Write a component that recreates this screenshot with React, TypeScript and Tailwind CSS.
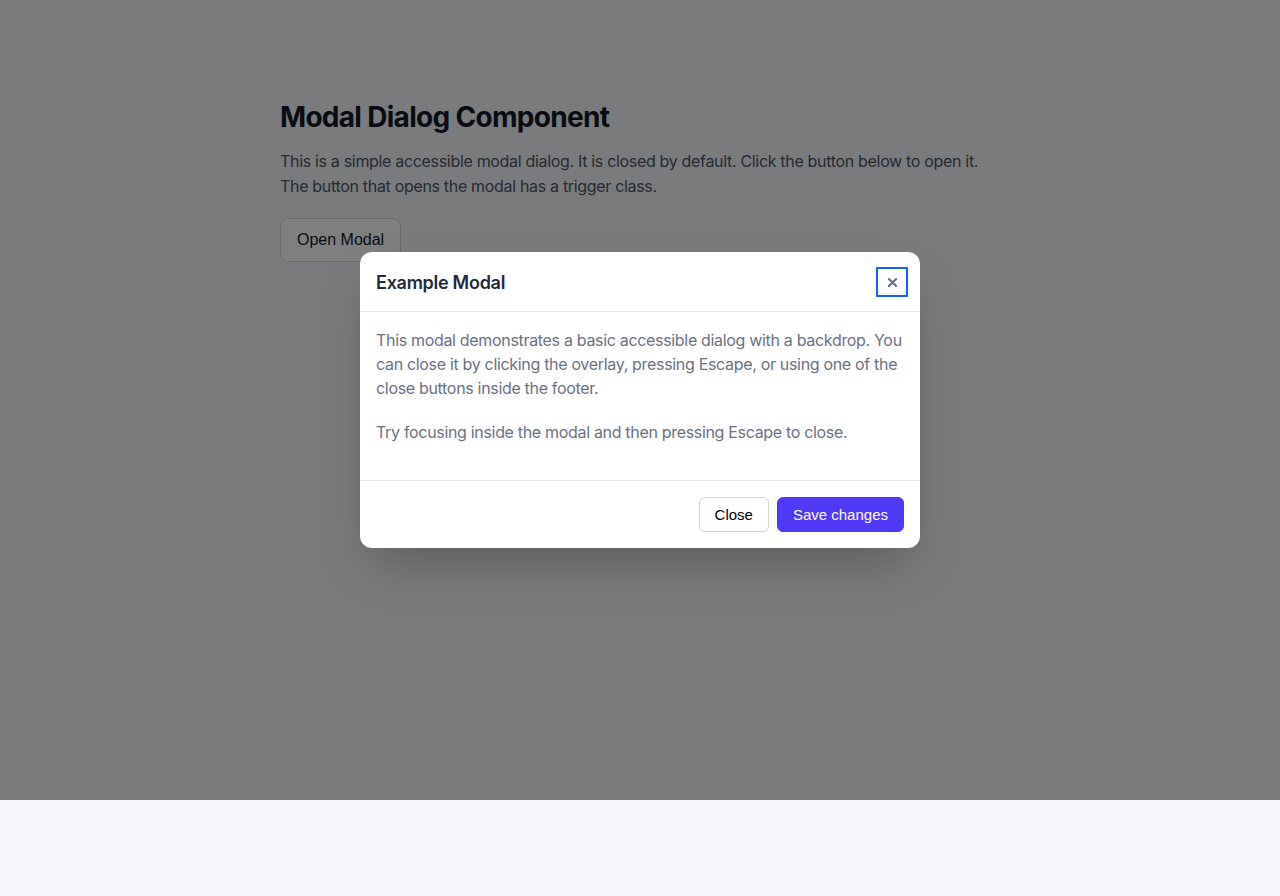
export default function App() {
  return (
    <div className="min-h-screen bg-[#f5f6fa] font-['Inter',sans-serif]">
      <section className="relative h-[800px]">
        <div className="mx-auto max-w-[720px] pt-[98px]">
          <h1 className="mb-[13px] text-[28px] leading-[38px] font-bold tracking-[-0.025em] text-gray-900">
            Modal Dialog Component
          </h1>
          <p className="mb-[19px] text-base leading-[25px] tracking-[-0.02em] text-gray-600">
            This is a simple accessible modal dialog. It is closed by default.
            Click the button below to open it. The button that opens the modal
            has a trigger class.
          </p>
          <button className="rounded-lg border border-gray-300 bg-white px-4 py-3 font-['Liberation_Sans',Arial,sans-serif] text-base leading-[18px] text-gray-900">
            Open Modal
          </button>
        </div>

        {/* backdrop */}
        <div className="absolute inset-0 flex items-center justify-center bg-black/50">
          <div className="w-[560px] overflow-hidden rounded-xl bg-white shadow-2xl">
            <div className="flex items-center justify-between border-b border-gray-200 pt-[15px] pr-3 pb-[14px] pl-4">
              <h2 className="text-[18px] font-semibold tracking-[-0.015em] text-gray-800">
                Example Modal
              </h2>
              <button className="flex h-[30px] w-8 items-center justify-center border-2 border-blue-600 text-gray-500">
                <svg width="9" height="9" viewBox="0 0 10 10">
                  <path
                    d="M1 1L9 9M9 1L1 9"
                    stroke="currentColor"
                    strokeWidth="2.4"
                    strokeLinecap="round"
                  />
                </svg>
              </button>
            </div>
            <div className="p-4 text-base leading-6 tracking-[-0.02em] text-gray-500">
              <p className="mb-5">
                This modal demonstrates a basic accessible dialog with a
                backdrop. You can close it by clicking the overlay, pressing
                Escape, or using one of the close buttons inside the footer.
              </p>
              <p className="mb-5">
                Try focusing inside the modal and then pressing Escape to close.
              </p>
            </div>
            <div className="flex justify-end gap-2 border-t border-gray-200 p-4 font-['Liberation_Sans',Arial,sans-serif] text-[15px] leading-[17px]">
              <button className="rounded-md border border-gray-300 bg-white px-[15px] py-2 text-black">
                Close
              </button>
              <button className="rounded-md border border-indigo-600 bg-indigo-600 px-[15px] py-2 text-white">
                Save changes
              </button>
            </div>
          </div>
        </div>
      </section>
    </div>
  );
}
